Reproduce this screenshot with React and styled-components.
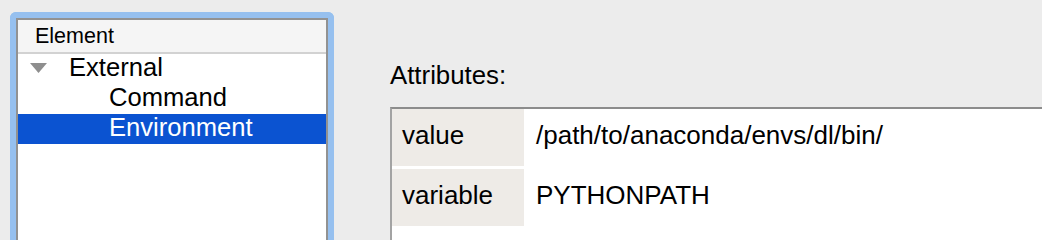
import React from 'react';
import styled, {createGlobalStyle} from 'styled-components';

const GlobalStyle = createGlobalStyle`
    html, body {
        margin: 0;
        padding: 0;
        background: #ececec;
        overflow: hidden;
    }
    body {
        font-family: "Liberation Sans", Arial, sans-serif;
        color: #000;
    }
`;

const Page = styled.div`
    display: flex;
    align-items: stretch;
    width: 1042px;
    height: 240px;
    gap: 56px;
    padding: 12px 0 0 10px;
    box-sizing: border-box;
`;

// the panel runs on past the bottom of the window, so no bottom edge
const FocusRing = styled.div`
    flex: 0 0 auto;
    width: 324px;
    box-sizing: border-box;
    border: 6px solid #96c0ef;
    border-bottom: none;
    border-radius: 6px 6px 0 0;
`;

const Outline = styled.div`
    height: 100%;
    box-sizing: border-box;
    border: 2px solid #929292;
    border-bottom: none;
    background: #fff;
`;

const Header = styled.div`
    height: 32px;
    display: flex;
    align-items: center;
    padding-left: 17px;
    background: #f5f5f5;
    border-bottom: 2px solid #d2d2d2;
    font-size: 21.5px;
`;

const Row = styled.div`
    height: 30px;
    box-sizing: border-box;
    display: flex;
    align-items: center;
    padding: 0 0 4px ${p => p.$indent}px;
    font-size: 25.6px;
    background: ${p => (p.$selected ? '#0b53d1' : 'transparent')};
    color: ${p => (p.$selected ? '#fff' : '#000')};
`;

const Disclosure = styled.svg`
    width: 17px;
    height: 10px;
    margin: 0 22px 0 0;
    position: relative;
    top: 1px;
`;

const Attributes = styled.div`
    flex: 1;
    display: flex;
    flex-direction: column;
    padding-top: 49px;
    min-width: 0;
`;

const Label = styled.div`
    font-size: 25.8px;
    margin-bottom: 17px;
`;

const Table = styled.div`
    flex: 1;
    display: grid;
    grid-template-columns: 132px 1fr;
    grid-auto-rows: 57px;
    row-gap: 3px;
    align-content: start;
    background: #fff;
    border-top: 2px solid #8c8c8c;
    border-left: 2px solid #a3a3a3;
`;

const Cell = styled.div`
    display: flex;
    align-items: center;
    box-sizing: border-box;
    padding: 0 0 4px ${p => (p.$key ? 10 : 12)}px;
    font-size: 26px;
    background: ${p => (p.$key ? '#eeebe7' : '#fff')};
    white-space: nowrap;
`;

const attrs = [
    ['value', '/path/to/anaconda/envs/dl/bin/'],
    ['variable', 'PYTHONPATH'],
];

export default function App() {
    return <>
        <GlobalStyle/>
        <Page>
            <FocusRing>
                <Outline>
                    <Header>Element</Header>
                    <Row $indent={12}>
                        <Disclosure viewBox="0 0 17 10">
                            <polygon points="0,0 17,0 8.5,10" fill="#8e8e8e"/>
                        </Disclosure>
                        External
                    </Row>
                    <Row $indent={91}>Command</Row>
                    <Row $indent={91} $selected>Environment</Row>
                </Outline>
            </FocusRing>
            <Attributes>
                <Label>Attributes:</Label>
                <Table>
                    {attrs.map(([k, v]) => <React.Fragment key={k}>
                        <Cell $key>{k}</Cell>
                        <Cell>{v}</Cell>
                    </React.Fragment>)}
                </Table>
            </Attributes>
        </Page>
    </>;
}
